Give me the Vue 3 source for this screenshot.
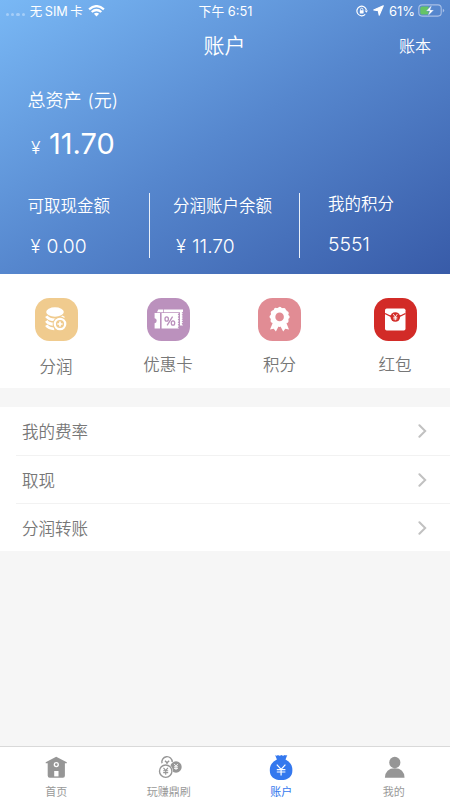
<script setup>
const balances = [
  { label: '可取现金额', sign: '¥', value: '0.00' },
  { label: '分润账户余额', sign: '¥', value: '11.70' },
  { label: '我的积分', sign: '', value: '5551' },
]
const rows = ['我的费率', '取现', '分润转账']
</script>

<template>
  <main class="page">
    <header class="hero">
      <div class="status">
        <div class="carrier">
          <span class="dots"><i></i><i></i><i></i><i></i></span>
          <span class="sim">无<b>SIM</b>卡</span>
          <svg class="wifi" width="17" height="12" viewBox="0 0 17 12" fill="none" stroke="#fff" stroke-width="2.3">
            <path d="M1.1 4.3Q8.5-2 15.9 4.3M3.7 7Q8.5 2.9 13.3 7" />
            <path d="M5.9 8.8Q8.5 6.8 11.1 8.8L8.5 11.5Z" fill="#fff" stroke="none" />
          </svg>
        </div>
        <div class="clock">下午 6:51</div>
        <div class="power">
          <svg width="12" height="12" viewBox="0 0 12 12" fill="none" stroke="#fff" stroke-width="1.2">
            <path d="M9.2 9.3A4.8 4.8 0 1 1 10.4 5" />
            <path d="M8.6 5.4H12L10.3 7.8Z" fill="#fff" stroke="none" />
            <path d="M4.5 5.5V4.4a1.2 1.2 0 0 1 2.4 0v1.1" stroke-width=".9" />
            <rect x="3.8" y="5.2" width="3.8" height="3.2" rx=".4" fill="#fff" stroke="none" />
          </svg>
          <svg class="nav-arrow" width="11" height="11" viewBox="0 0 11 11"><path d="M10.3.7 6.2 10.2 5.3 5.7.7 5Z" fill="#fff" stroke="#fff" stroke-width="1.1" stroke-linejoin="round" /></svg>
          <span class="percent">61%</span>
          <svg width="27" height="13" viewBox="0 0 27 13">
            <rect x=".8" y=".9" width="22.4" height="11.2" rx="3.3" fill="none" stroke="#a9c0e6" stroke-width="1.1" />
            <path d="M4 2.4h6.6v8.2H4a1.7 1.7 0 0 1-1.7-1.7V4.1A1.7 1.7 0 0 1 4 2.4Z" fill="#65c466" />
            <path d="M13.8 1.1 8.2 7.1h3.4L9.9 12l5.9-6.1h-3.5Z" fill="#fff" stroke="#6b94d2" stroke-width=".4" />
            <path d="M24.8 4.8q1.4.5 1.4 1.8t-1.4 1.8Z" fill="#a9c0e6" />
          </svg>
        </div>
      </div>
      <div class="titlebar">
        <h1>账户</h1>
        <span class="ledger">账本</span>
      </div>
      <div class="total">
        <div class="total-label">总资产<span>(元)</span></div>
        <div class="total-value"><span class="yen">¥</span><span>11.70</span></div>
      </div>
      <div class="balances">
        <div v-for="b in balances" :key="b.label" class="balance">
          <div class="balance-label">{{ b.label }}</div>
          <div class="balance-value"><span v-if="b.sign" class="sign">{{ b.sign }}</span>{{ b.value }}</div>
        </div>
      </div>
    </header>

    <section class="shortcuts">
      <div class="shortcut profit">
        <svg class="tile" viewBox="0 0 43 43">
          <rect width="43" height="43" rx="14.5" fill="#f0cb8e" />
          <ellipse cx="20" cy="14" rx="8.8" ry="4.7" fill="#fff" />
          <g fill="none" stroke="#fff" stroke-width="2.9">
            <path d="M11.3 18.2Q14 22.2 21.5 21.8 26.5 21.5 28.7 18.3" />
            <path d="M11.3 22.9Q13.5 26.2 19 26.2" />
            <path d="M11.3 27.2Q13.7 30.7 19.3 30.7" />
          </g>
          <circle cx="25" cy="26" r="7.4" fill="#f0cb8e" />
          <circle cx="25" cy="26" r="5.2" fill="none" stroke="#fff" stroke-width="2.3" />
          <path d="M25 23.4v5.2M22.4 26h5.2" stroke="#fff" stroke-width="1.7" />
        </svg>
        <span>分润</span>
      </div>
      <div class="shortcut coupon">
        <svg class="tile" viewBox="0 0 43 43">
          <rect width="43" height="43" rx="14.5" fill="#bb91bd" />
          <path d="M10 14.3 11.3 11.4H16.3V14.3ZM17 11.4H36V13.7L34.6 14.7 36 15.7 34.6 16.8 36 17.9 34.6 19 36 20.1 34.6 21.2 36 22.3 34.6 23.4 36 24.5 34.6 25.6 36 27.4H33V14.3H17Z" fill="#fff" />
          <path d="M7.6 15H13V30.5H7.6V25.3A2.6 2.6 0 0 0 7.6 20.2ZM14.6 15H32L30.7 16.4 32 17.7 30.7 19 32 20.3 30.7 21.6 32 22.9 30.7 24.2 32 25.5 30.7 26.8 32 28.1 30.7 29.3 32 30.5H14.6Z" fill="#fff" />
          <g fill="none" stroke="#bb91bd" stroke-width="1.3">
            <ellipse cx="19.7" cy="21" rx="1.7" ry="2.2" /><ellipse cx="26" cy="25" rx="1.7" ry="2.2" /><path d="M25.6 18.6 20.1 27.4" />
          </g>
        </svg>
        <span>优惠卡</span>
      </div>
      <div class="shortcut points">
        <svg class="tile" viewBox="0 0 43 43">
          <rect width="43" height="43" rx="14.5" fill="#e18c94" />
          <path d="M14.9 24.5 12 31.4 15.7 30.8 17.9 33.5 21.5 26.5 25.2 33.5 27.3 30.8 31 31.4 28.2 24.5Z" fill="#fff" />
          <circle cx="21.6" cy="18.9" r="9.3" fill="#fff" />
          <circle cx="21.6" cy="18.9" r="8.4" fill="none" stroke="#fff" stroke-width="3.4" stroke-linecap="round" stroke-dasharray=".01 4.388" />
          <circle cx="21.6" cy="18.9" r="4.3" fill="#e18c94" />
        </svg>
        <span>积分</span>
      </div>
      <div class="shortcut packet">
        <svg class="tile" viewBox="0 0 43 43">
          <rect width="43" height="43" rx="14.5" fill="#d22b27" />
          <rect x="11" y="10.5" width="20.5" height="22" rx="1.7" fill="#fff" />
          <path d="M11 15.5Q21.3 22.3 31.5 15.5" fill="none" stroke="#d22b27" stroke-width="1.4" />
          <circle cx="21.3" cy="19" r="4.8" fill="#d22b27" />
          <path d="M19.3 16.1 21.3 19 23.3 16.1M21.3 19V22.3M19.3 19.3H23.3M19.3 20.9H23.3" fill="none" stroke="#fff" stroke-width=".9" />
        </svg>
        <span>红包</span>
      </div>
    </section>

    <section class="menu">
      <div v-for="row in rows" :key="row" class="row">
        <span>{{ row }}</span>
        <svg width="9" height="14" viewBox="0 0 9 14"><path d="M1.4 1.2 7.2 7 1.4 12.8" fill="none" stroke="#c1c1c1" stroke-width="2" stroke-linecap="round" /></svg>
      </div>
    </section>

    <nav class="tabs">
      <div class="tab">
        <svg width="26" height="28" viewBox="0 0 26 28">
          <path d="M2.7 9.2 13.2 3.7 23.8 9.2V10.3H21.9V22.7Q21.9 24.8 19.9 24.8H6.7Q4.7 24.8 4.7 22.7V10.3H2.7Z" fill="#969696" />
          <circle cx="13.3" cy="11.6" r="2" fill="none" stroke="#fff" stroke-width="1.3" />
          <rect x="11.2" y="18" width="4.3" height="5.4" fill="#fff" />
        </svg>
        <span>首页</span>
      </div>
      <div class="tab">
        <svg width="26" height="28" viewBox="0 0 26 28" fill="none" stroke="#969696" stroke-width="1.4">
          <path d="M6 10.3A5.2 5.2 0 1 1 16.2 9" />
          <path d="M9 7.8 11 9.8 13.2 7.8M11 9.7V11" />
          <circle cx="20" cy="14" r="5.7" fill="#969696" stroke="none" />
          <path d="M18.2 10.9 20 13.3 21.8 10.9M20 13.3V17M18 13.8H22M18 15.4H22" stroke="#fff" stroke-width=".9" />
          <circle cx="9.7" cy="18.2" r="7.3" fill="#fff" stroke="none" />
          <circle cx="9.7" cy="18.2" r="6.2" fill="#fff" />
          <path d="M7.5 14.8 9.7 17.6 11.9 14.8M9.7 17.6V21.7M7.2 17.7H12.2M7.2 19.6H12.2" stroke-width="1.1" />
        </svg>
        <span>玩赚鼎刷</span>
      </div>
      <div class="tab active">
        <svg width="26" height="28" viewBox="0 0 26 28">
          <path d="M7.1 2.1Q8.6 3.2 10 2.1 11.6 3.2 13.4 2.1 15 3.2 16.8 2.1 18 2.9 19.3 2.1L17.5 6.6Q24.4 9.8 24.4 17.2C24.4 23.5 20.5 27 13.1 27S1.8 23.5 1.8 17.2Q1.8 9.8 8.9 6.6Z" fill="#3478ee" />
          <path d="M8.8 11.7 13.1 16.4 17.4 11.7M13.1 16.4V22.4M8.8 16.6H17.4M8.8 19H17.4" fill="none" stroke="#fff" stroke-width="1.2" />
        </svg>
        <span>账户</span>
      </div>
      <div class="tab">
        <svg width="26" height="28" viewBox="0 0 26 28" fill="#969696">
          <ellipse cx="13.8" cy="9.5" rx="5.6" ry="5.8" />
          <path d="M3.9 24.7Q4.4 15.2 13.8 15.2T23.5 24.7Z" />
        </svg>
        <span>我的</span>
      </div>
    </nav>
  </main>
</template>

<style>
body { margin: 0; }
</style>

<style scoped>
.page {
  width: 450px;
  height: 800px;
  display: flex;
  flex-direction: column;
  overflow: hidden;
  background: #f6f6f6;
  color: #777;
  font-family: Inter, "Noto Sans CJK SC", sans-serif;
  font-weight: 350;
  white-space: nowrap;
}
svg { display: block; flex: none; }
.hero {
  height: 274px;
  color: #fff;
  background: linear-gradient(to bottom right, #79b8f5 0%, #5687ce 50%, #385ba8 100%);
}
.status {
  height: 21px;
  display: grid;
  grid-template-columns: 1fr auto 1fr;
  align-items: center;
  padding: 0 5px 0 6px;
  font-size: 12.5px;
  font-weight: 400;
}
.carrier { display: flex; align-items: center; }
.dots { display: flex; gap: 2px; margin: 7px 5px 0 0; }
.dots i { width: 3.2px; height: 3px; border-radius: 2px; background: #a5cef8; }
.sim b { font-weight: 400; margin: 0 2.5px; font-size: 12.7px; }
.wifi { margin-left: 5px; }
.clock { font-size: 12.8px; }
.power { display: flex; align-items: center; justify-content: flex-end; }
.nav-arrow { margin: 0 5px 0 5px; }
.percent { font-size: 13px; margin-right: 3px; }
.titlebar {
  height: 49px;
  display: grid;
  grid-template-columns: 1fr auto 1fr;
  align-items: center;
  padding: 0 19px 0 18px;
}
h1 { grid-column: 2; margin: 0; font-size: 21px; font-weight: 350; line-height: 30px; }
.ledger { justify-self: end; font-size: 16px; line-height: 24px; }
.total { padding: 17px 0 0 27.5px; }
.total-label { font-size: 18px; line-height: 28px; display: flex; gap: 6px; }
.total-value { display: flex; align-items: baseline; font-size: 29px; font-weight: 380; line-height: 34px; margin-top: 12px; padding-left: 3.5px; }
.yen { font-size: 17.5px; width: 18px; font-weight: 350; }
.balances { display: grid; grid-template-columns: 150px 150px 150px; margin-top: 28px; }
.balance { height: 65px; box-sizing: border-box; padding-left: 27.5px; border-right: 1px solid #e9f0fa; }
.balance + .balance { padding-left: 23px; }
.balance:last-child { border: 0; padding-left: 28px; }
.balance-label { font-size: 16.5px; line-height: 24px; padding-top: 1px; }
.balance:last-child .balance-label { padding-top: 0; margin-top: -1px; margin-bottom: 2px; }
.balance-value { font-size: 19.3px; line-height: 24px; margin-top: 16px; display: flex; }
.sign { width: 16px; padding-left: 3px; font-size: 18.5px; }
.shortcuts { height: 114px; display: flex; background: #fff; font-size: 16.5px; }
.shortcut { width: 112px; display: flex; flex-direction: column; align-items: center; padding-top: 24px; line-height: 24px; box-sizing: border-box; }
.points { width: 111px; }
.packet { width: 115px; padding-left: 5px; }
.tile { width: 43px; height: 43px; margin-bottom: 12px; }
.profit .tile { margin-bottom: 14px; }
.menu { margin-top: 19px; background: #fff; }
.row {
  height: 48px;
  box-sizing: border-box;
  margin-left: 16px;
  padding: 0 23px 0 6px;
  display: flex;
  align-items: center;
  justify-content: space-between;
  font-size: 16.5px;
  border-bottom: 1px solid #f2f2f2;
}
.row:first-child { height: 49px; }
.row:last-child { height: 47px; border: 0; }
.tabs {
  height: 54px;
  box-sizing: border-box;
  margin-top: auto;
  display: grid;
  grid-template-columns: repeat(4, 1fr);
  background: #fff;
  border-top: 1px solid #d9d9d9;
  color: #999;
  font-size: 11px;
  font-weight: 400;
}
.tab { display: flex; flex-direction: column; align-items: center; padding-top: 6px; line-height: 16px; }
.tab span { margin-top: 3px; }
.active { color: #3478ee; }
</style>
